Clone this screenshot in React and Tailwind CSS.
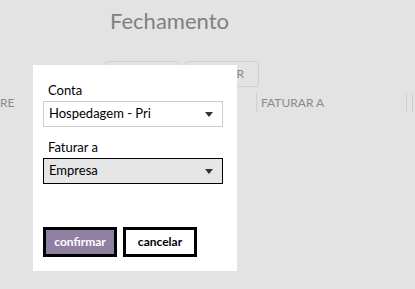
import React from 'react';

const font = { fontFamily: '"Segoe UI", Lato, "Noto Sans", sans-serif' };

function Caret() {
  return (
    <svg width="8" height="5" viewBox="0 0 8 5" className="text-[#333]">
      <path d="M0 0 H8 L4 5 Z" fill="currentColor" />
    </svg>
  );
}

function Select({ value, active }) {
  return (
    <div
      className={
        'h-[26px] w-[180px] flex items-center justify-between pl-[5px] pr-[9px] text-[13px] text-black ' +
        (active ? 'bg-[#e6e6e6] border border-black' : 'bg-white border border-[#cdcdcd]')
      }
    >
      <span>{value}</span>
      <Caret />
    </div>
  );
}

export default function App() {
  return (
    <div className="relative w-[415px] h-[289px] overflow-hidden bg-[#e3e3e3]" style={font}>
      {/* page behind the dialog */}
      <div className="flex flex-col">
        <h1 className="pl-[110px] pt-[6px] h-[40px] text-[22px] leading-[30px] text-[#808080]">Fechamento</h1>
        <div className="flex gap-[6px] pl-[105px] mt-[21px]">
          <div className="w-[74px] h-[26px] rounded-[3px] border border-[#cfcfcf]" />
          <div className="w-[74px] h-[26px] rounded-[3px] border border-[#cfcfcf] flex items-center justify-end pr-[14px] text-[12px] text-[#888]">
            FATURAR
          </div>
        </div>
        <div className="flex items-center h-[19px] mt-[6px] text-[12px] text-[#8a8a8a]">
          <span className="w-[10px]">RE</span>
          <div className="ml-[246px] w-px h-[19px] bg-[#cfcfcf]" />
          <span className="ml-[4px] w-[145px]">FATURAR A</span>
          <div className="w-px h-[19px] bg-[#cfcfcf]" />
          <div className="ml-[5px] w-px h-[19px] bg-[#cfcfcf]" />
        </div>
      </div>

      {/* dialog */}
      <div className="absolute left-[33px] top-[65px] w-[204px] h-[206px] bg-white pl-[10px] pt-[16px]">
        <div className="pl-[5px] text-[13px] leading-[18px] text-black">Conta</div>
        <div className="mt-[2px]">
          <Select value="Hospedagem - Pri" />
        </div>
        <div className="pl-[5px] mt-[11px] text-[13px] leading-[18px] text-black">Faturar a</div>
        <div className="mt-[2px]">
          <Select value="Empresa" active />
        </div>
        <div className="flex gap-[6px] mt-[43px]">
          <button className="w-[74px] h-[30px] bg-[#8f7fa1] border-[3px] border-black text-white font-bold text-[12px]">
            confirmar
          </button>
          <button className="w-[74px] h-[30px] bg-white border-[3px] border-black text-black font-bold text-[12px]">
            cancelar
          </button>
        </div>
      </div>
    </div>
  );
}
